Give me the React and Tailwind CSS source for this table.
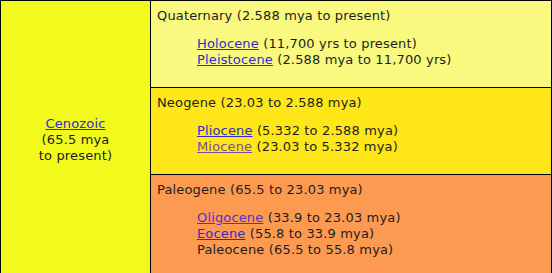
const periods = [
  {
    name: "Quaternary (2.588 mya to present)",
    bg: "bg-[#f9f97f]",
    epochs: [
      { name: "Holocene", link: "text-[#2e2ec4]", rest: " (11,700 yrs to present)" },
      { name: "Pleistocene", link: "text-[#2e2ec4]", rest: " (2.588 mya to 11,700 yrs)" },
    ],
  },
  {
    name: "Neogene (23.03 to 2.588 mya)",
    bg: "bg-[#ffe619]",
    epochs: [
      { name: "Pliocene", link: "text-[#2e2ec4]", rest: " (5.332 to 2.588 mya)" },
      { name: "Miocene", link: "text-[#7a4f8f]", rest: " (23.03 to 5.332 mya)" },
    ],
  },
  {
    name: "Paleogene (65.5 to 23.03 mya)",
    bg: "bg-[#fd9a52]",
    epochs: [
      { name: "Oligocene", link: "text-[#5a2fc8]", rest: " (33.9 to 23.03 mya)" },
      { name: "Eocene", link: "text-[#2e2ec4]", rest: " (55.8 to 33.9 mya)" },
      { name: "Paleocene", link: null, rest: " (65.5 to 55.8 mya)" },
    ],
  },
];

export default function App() {
  return (
    <div
      className="w-[552px] flex border-t border-l border-r border-black text-[13px] leading-[16px] tracking-[0.15px] text-[#1e1e1e]"
      style={{ fontFamily: '"DejaVu Sans", Verdana, sans-serif' }}
    >
      <div className="w-[150px] shrink-0 bg-[#f2f91d] border-r border-black flex flex-col items-center justify-center text-center pt-[2px]">
        <a href="#" className="underline text-[#2e2ec4]">Cenozoic</a>
        <span>(65.5 mya</span>
        <span>to present)</span>
      </div>
      <div className="flex-1 flex flex-col">
        {periods.map((p, i) => (
          <div
            key={p.name}
            className={`${p.bg} ${i > 0 ? "border-t border-black" : ""} pl-[6px] pt-[7px] pb-[19px]`}
          >
            <div>{p.name}</div>
            <div className="mt-[12px] pl-[40px]">
              {p.epochs.map((e) => (
                <div key={e.name}>
                  {e.link ? (
                    <a href="#" className={`underline ${e.link}`}>{e.name}</a>
                  ) : (
                    <span>{e.name}</span>
                  )}
                  {e.rest}
                </div>
              ))}
            </div>
          </div>
        ))}
      </div>
    </div>
  );
}
